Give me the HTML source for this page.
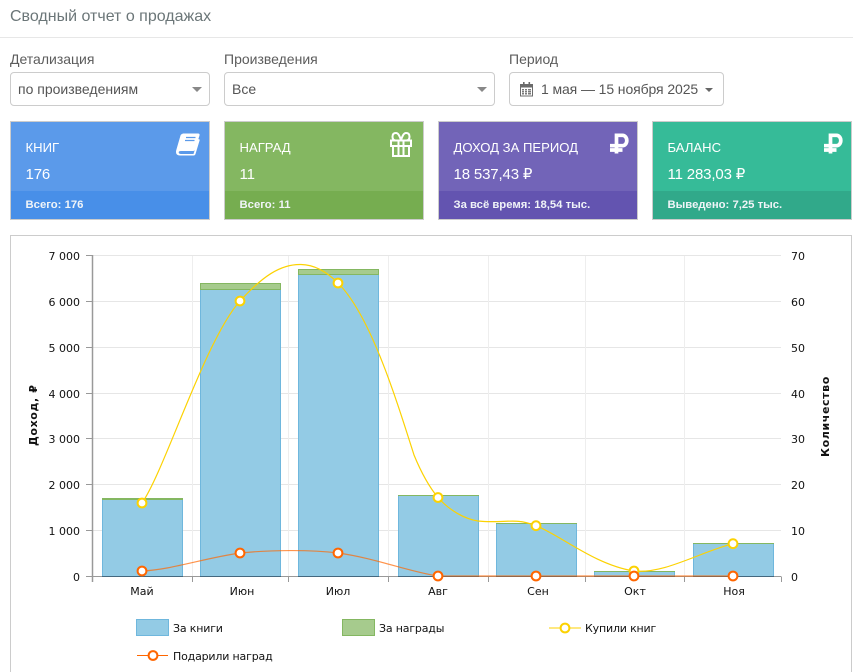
<!DOCTYPE html>
<html lang="ru">
<head>
<meta charset="utf-8">
<title>Сводный отчет о продажах</title>
<style>
html,body{margin:0;padding:0;background:#fff;width:853px;height:672px;overflow:hidden;}
#wrap{position:relative;width:853px;height:672px;overflow:hidden;font-family:"Liberation Sans","DejaVu Sans",sans-serif;color:#555;}
.abs{position:absolute;white-space:nowrap;}
.title{left:10px;top:7px;font-size:16px;line-height:20px;color:#6b7678;}
.hr{left:0;top:37px;width:853px;height:1px;background:#e7e7e7;}
.lbl{top:51px;font-size:14px;line-height:17px;color:#5c5c5c;}
.box{top:72px;height:32px;border:1px solid #ccc;border-radius:4px;background:#fff;font-size:14px;line-height:33px;color:#555;box-sizing:content-box;}
.arrow{width:0;height:0;border-left:5px solid transparent;border-right:5px solid transparent;border-top:5px solid #888;}
.card{top:121px;width:198px;height:97px;border:1px solid #ccc;color:#fff;overflow:hidden;}
.card .t{position:absolute;left:14.500px;top:17px;font-size:13.100px;line-height:18px;white-space:nowrap;}
.card .v{position:absolute;left:14.500px;top:43px;font-size:15px;line-height:20px;letter-spacing:-.15px;white-space:nowrap;}
.card .f{position:absolute;left:0;top:69px;width:198px;height:28px;font-size:11.300px;font-weight:bold;line-height:28px;text-indent:14.500px;color:#f0f4f8;white-space:nowrap;}
.panel{left:10px;top:235px;width:840px;height:436px;border:1px solid #ccc;border-bottom:none;}
svg{position:absolute;left:0;top:0;display:block;}
svg text{font-family:"DejaVu Sans",sans-serif;font-size:11px;fill:#111;}
svg text.lg{letter-spacing:-.18px;}
svg text.at{font-weight:bold;letter-spacing:.62px;}
</style>
</head>
<body>
<div id="wrap">
<div class="abs title">Сводный отчет о продажах</div>
<div class="abs hr"></div>

<div class="abs lbl" style="left:10px">Детализация</div>
<div class="abs box" style="left:10px;width:198px;text-indent:7px">по произведениям</div>
<div class="abs arrow" style="left:192px;top:87px"></div>

<div class="abs lbl" style="left:224px">Произведения</div>
<div class="abs box" style="left:224px;width:269px;text-indent:7px">Все</div>
<div class="abs arrow" style="left:477px;top:87px"></div>

<div class="abs lbl" style="left:509px">Период</div>
<div class="abs box" style="left:509px;width:213px;text-indent:31px;letter-spacing:-.1px">1 мая — 15 ноября 2025</div>
<div class="abs arrow" style="left:705px;top:88px;border-left-width:4px;border-right-width:4px;border-top-width:4px;border-top-color:#666"></div>

<div class="abs card" style="left:10px;background:#5b9aea"><div class="t">КНИГ</div><div class="v">176</div><div class="f" style="background:#488fe8">Всего: 176</div></div>
<div class="abs card" style="left:224px;background:#84b761"><div class="t">НАГРАД</div><div class="v">11</div><div class="f" style="background:#76ad50">Всего: 11</div></div>
<div class="abs card" style="left:438px;background:#7264b8"><div class="t">ДОХОД ЗА ПЕРИОД</div><div class="v">18 537,43 ₽</div><div class="f" style="background:#6354b0">За всё время: 18,54 тыс.</div></div>
<div class="abs card" style="left:652px;background:#36bb98"><div class="t">БАЛАНС</div><div class="v">11 283,03 ₽</div><div class="f" style="background:#31a98a">Выведено: 7,25 тыс.</div></div>

<div class="abs panel"></div>

<svg width="853" height="672" viewBox="0 0 853 672">
  <!-- calendar icon -->
  <g>
    <rect x="520.500" y="84.500" width="12" height="11.500" fill="#fff" stroke="#6b6b6b"/>
    <rect x="520" y="84" width="13" height="3.500" fill="#6b6b6b"/>
    <rect x="523" y="82" width="1.600" height="3" fill="#6b6b6b"/><rect x="528.500" y="82" width="1.600" height="3" fill="#6b6b6b"/>
    <g fill="#7a7a7a">
      <rect x="522" y="89" width="2" height="1.500"/><rect x="525" y="89" width="2" height="1.500"/><rect x="528" y="89" width="3" height="1.500"/>
      <rect x="522" y="91" width="2" height="1.500"/><rect x="525" y="91" width="2" height="1.500"/><rect x="528" y="91" width="3" height="1.500"/>
      <rect x="522" y="93" width="2" height="1.500"/><rect x="525" y="93" width="2" height="1.500"/><rect x="528" y="93" width="3" height="1.500"/>
    </g>
  </g>

  <!-- book icon -->
  <path d="M182.500 133.500H198q2 0 1.500 2L195 149.500q-.5 1.500-2 1.500H181q-2.500 0-2.300 1.500t2.300 1.500h12.500l4.800-15 1.500.8-4.300 14.200q-.4 1.500-2 1.500H180q-4 0-4-3.500 0-1 .3-2l4.200-14.500q.5-1.500 2-1.500z" fill="#fff"/>
  <path d="M186 137.500h9.500M185 140.500h9.500" stroke="#5b9aea" stroke-width="1.200" fill="none"/>

  <!-- gift icon -->
  <g fill="none" stroke="#fff" stroke-width="2">
    <rect x="391" y="140.500" width="20" height="5.500"/>
    <path d="M393 146v10h16v-10"/>
    <path d="M398.500 140.500v15.500M403.500 140.500v15.500"/>
    <path d="M401 140.500h-5q-3.500 0-3.500-3.800 0-3.700 3.500-3.700 3 0 5 7.500zM401 140.500h5q3.500 0 3.500-3.800 0-3.700-3.500-3.700-3 0-5 7.500z"/>
  </g>

  <!-- ruble icons -->
  <g fill="none" stroke="#fff" stroke-width="3.700">
    <path d="M616.500 153.500V135.300h6a4.300 5.200 0 0 1 0 10.400H610M610 150h12.500"/>
    <path d="M830.500 153.500V135.300h6a4.300 5.200 0 0 1 0 10.400H824M824 150h12.500"/>
  </g>

  <!-- grid -->
  <g stroke="#e6e6e6" stroke-width="1" shape-rendering="crispEdges">
    <path d="M92 255.500H781M92 301.500H781M92 347.500H781M92 393.500H781M92 438.500H781M92 484.500H781M92 530.500H781"/>
  </g>
  <g stroke="#eeeeee" stroke-width="1" shape-rendering="crispEdges">
    <path d="M192.500 256V576M288.500 256V576M388.500 256V576M488.500 256V576M585.500 256V576M684.500 256V576"/>
  </g>

  <!-- bars -->
  <g fill="#93cbe5" stroke="#6fb7dd" stroke-width="1">
    <rect x="102.500" y="499.500" width="80" height="77"/>
    <rect x="200.500" y="289.500" width="80" height="287"/>
    <rect x="298.500" y="274.500" width="80" height="302"/>
    <rect x="398.500" y="495.500" width="80" height="81"/>
    <rect x="496.500" y="523.500" width="80" height="53"/>
    <rect x="594.500" y="571.500" width="80" height="5"/>
    <rect x="693.500" y="543.500" width="80" height="33"/>
  </g>
  <g fill="#a6cb8d" stroke="#84b761" stroke-width="1">
    <rect x="200.500" y="283.500" width="80" height="6"/>
    <rect x="298.500" y="269.500" width="80" height="5"/>
  </g>
  <path d="M102 498.500H183M102 499.500H183M398 495.500H479M496 523.500H577M594 571.500H675M693 543.500H774" stroke="#84b761" stroke-width="1" fill="none" shape-rendering="crispEdges"/>

  <!-- axes -->
  <path d="M92.500 255V582" stroke="#999" stroke-width="1.500" fill="none"/>
  <path d="M92 576.500H781.500" stroke="#999" stroke-width="1" fill="none" shape-rendering="crispEdges"/>
  <path d="M102 576.500H183M200 576.500H281M298 576.500H379M398 576.500H479M496 576.500H577M594 576.500H675M693 576.500H774" stroke="#44687f" stroke-width="1" fill="none" shape-rendering="crispEdges"/>
  <g stroke="#999" stroke-width="1" shape-rendering="crispEdges" fill="none">
    <path d="M86 255.500H92M86 301.500H92M86 347.500H92M86 393.500H92M86 438.500H92M86 484.500H92M86 530.500H92M86 576.500H92"/>
    <path d="M192.500 577V582M288.500 577V582M388.500 577V582M488.500 577V582M585.500 577V582M684.500 577V582M781.500 577V582"/>
  </g>

  <!-- curves -->
  <path d="M142 503C165 470 205 340 240 301C262 277 280 264 301 264.500C315 264.700 327 272 338 283C370 315 395 395 414 455C421 472 430 488 438 497.500C450 511 465 519 478 521C495 523 510 520 520 521.500C526 522 531 524 536 525.700C560 535 595 565 634 571C665 574 700 552 733 543.700" fill="none" stroke="#fcd202" stroke-width="1.200"/>
  <path d="M142 571C170 570 205 558 240 553C270 550 310 549.500 338 553C375 558 410 572 438 576H733" fill="none" stroke="#ff6600" stroke-opacity=".7" stroke-width="1.200"/>

  <!-- points -->
  <g fill="#fff" stroke="#fcd202" stroke-width="2">
    <circle cx="142" cy="503" r="4.400"/><circle cx="240" cy="301" r="4.400"/><circle cx="338" cy="283" r="4.400"/>
    <circle cx="438" cy="497.500" r="4.400"/><circle cx="536" cy="525.700" r="4.400"/><circle cx="634" cy="571" r="4.400"/><circle cx="733" cy="543.700" r="4.400"/>
  </g>
  <g fill="#fff" stroke="#ff6600" stroke-width="2">
    <circle cx="142" cy="571" r="4.400"/><circle cx="240" cy="553" r="4.400"/><circle cx="338" cy="553" r="4.400"/>
    <circle cx="438" cy="576" r="4.400"/><circle cx="536" cy="576" r="4.400"/><circle cx="634" cy="576" r="4.400"/><circle cx="733" cy="576" r="4.400"/>
  </g>

  <!-- left labels -->
  <g text-anchor="end">
    <text x="80" y="260">7 000</text><text x="80" y="306">6 000</text><text x="80" y="352">5 000</text><text x="80" y="398">4 000</text>
    <text x="80" y="443">3 000</text><text x="80" y="489">2 000</text><text x="80" y="535">1 000</text><text x="80" y="581">0</text>
  </g>
  <!-- right labels -->
  <g>
    <text x="791" y="260">70</text><text x="791" y="306">60</text><text x="791" y="352">50</text><text x="791" y="398">40</text>
    <text x="791" y="443">30</text><text x="791" y="489">20</text><text x="791" y="535">10</text><text x="791" y="581">0</text>
  </g>
  <!-- month labels -->
  <g text-anchor="middle">
    <text x="142" y="595">Май</text><text x="242" y="595">Июн</text><text x="338" y="595">Июл</text><text x="438" y="595">Авг</text>
    <text x="538" y="595">Сен</text><text x="635" y="595">Окт</text><text x="734" y="595">Ноя</text>
  </g>
  <!-- axis titles -->
  <text class="at" transform="translate(37 446) rotate(-90)">Доход, ₽</text>
  <text class="at" transform="translate(829 457) rotate(-90)">Количество</text>

  <!-- legend -->
  <rect x="136.500" y="619.500" width="32" height="16" fill="#93cbe5" stroke="#6fb7dd"/>
  <text class="lg" x="173" y="632">За книги</text>
  <rect x="342.500" y="619.500" width="32" height="16" fill="#a6cb8d" stroke="#84b761"/>
  <text class="lg" x="379" y="632">За награды</text>
  <path d="M549 628H581" stroke="#fcd202" stroke-width="1"/>
  <circle cx="565" cy="628" r="4.400" fill="#fff" stroke="#fcd202" stroke-width="2"/>
  <text class="lg" x="585" y="632">Купили книг</text>
  <path d="M137 655.500H168" stroke="#ff6600" stroke-width="1"/>
  <circle cx="153" cy="655.500" r="4.400" fill="#fff" stroke="#ff6600" stroke-width="2"/>
  <text class="lg" x="173" y="660">Подарили наград</text>
</svg>
</div>
</body>
</html>
